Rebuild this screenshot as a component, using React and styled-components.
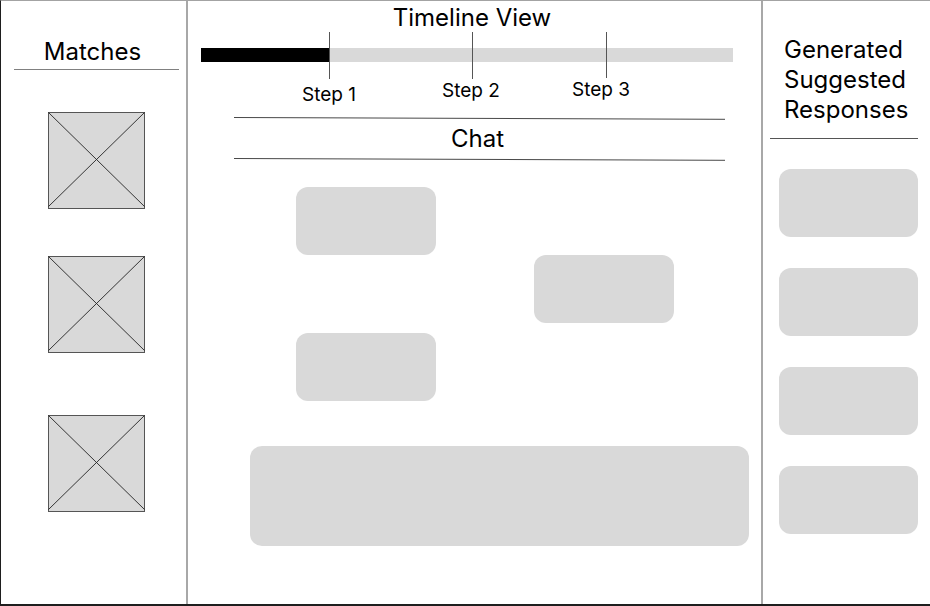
import React from "react";
import styled, { createGlobalStyle } from "styled-components";

const GlobalStyle = createGlobalStyle`
  *, *::before, *::after { box-sizing: border-box; }
  body {
    margin: 0;
    background: #fff;
    color: #000;
    font-family: Inter, "Liberation Sans", sans-serif;
  }
`;

const Page = styled.div`
  display: grid;
  grid-template-columns: 187px minmax(0, 1fr) 169px;
  min-height: 100vh;
  border-top: 1px solid #a3a3a3;
  border-left: 1px solid #1e1e1e;
  border-bottom: 2px solid #1e1e1e;
`;

const MatchesPanel = styled.aside`
  padding: 36px 7px 0 13px;
  border-right: 2px solid #a8a8a8;
`;

const Heading = styled.h2`
  margin: 0;
  font-size: 24px;
  font-weight: 400;
  line-height: ${(p) => p.$line || 30}px;
  text-align: ${(p) => p.$align || "center"};
`;

const MatchesHeader = styled.header`
  padding: 0 8px 2px 0;
  border-bottom: 1px solid #808080;
`;

const MatchList = styled.ul`
  display: flex;
  flex-direction: column;
  align-items: center;
  margin: 42px 0 0;
  padding: 0;
  list-style: none;
`;

const MatchItem = styled.li`
  height: 97px;
  margin-bottom: ${(p) => p.$after}px;
`;

const Thumb = styled.svg`
  display: block;
  width: 97px;
  height: 97px;
`;

const Main = styled.main`
  padding-top: 3px;
`;

const TimelineTitle = styled.div`
  padding-right: 5px;
`;

const Timeline = styled.div`
  display: grid;
  margin: 0 28px 0 13px;
`;

const Track = styled.div`
  grid-area: 1 / 1;
  height: 14px;
  margin-top: 16px;
  background: #d9d9d9;
`;

const Progress = styled.div`
  height: 100%;
  background: #000;
`;

const Steps = styled.ol`
  grid-area: 1 / 1;
  display: grid;
  grid-template-columns: 56fr 144fr 142fr 126fr 64fr;
  margin: 0;
  padding: 0;
  list-style: none;

  & > :first-child { grid-column-start: 2; }
`;

const Step = styled.li`
  display: flex;
  flex-direction: column;
  align-items: center;
  gap: ${(p) => p.$gap}px;
  font-size: 19px;
  line-height: 24px;
`;

const Tick = styled.span`
  width: 1px;
  height: ${(p) => p.$length}px;
  background: #555;
`;

const StepLabel = styled.span`
  padding-right: ${(p) => p.$shift}px;
`;

const ChatHeader = styled.header`
  margin: 10px 36px 0 46px;
`;

const ChatTitle = styled.div`
  padding: 4px 4px 4px 0;
`;

const RuleSvg = styled.svg`
  display: block;
  width: 100%;
  height: 3px;
`;

const Messages = styled.ol`
  display: flex;
  flex-direction: column;
  margin: 26px 87px 0 108px;
  padding: 0;
  list-style: none;
`;

const Bubble = styled.li`
  align-self: ${(p) => (p.$mine ? "flex-end" : "flex-start")};
  width: 140px;
  height: 68px;
  margin-bottom: ${(p) => p.$after}px;
  border-radius: 12px;
  background: #d9d9d9;
`;

const Composer = styled.form`
  display: flex;
  margin: 45px 12px 0 62px;
`;

const MessageBox = styled.textarea`
  flex: 1;
  min-width: 0;
  height: 100px;
  padding: 12px;
  border: 0;
  border-radius: 12px;
  background: #d9d9d9;
  font: inherit;
  resize: none;
`;

const ResponsesPanel = styled.aside`
  padding: 34px 12px 0 7px;
  border-left: 2px solid #a8a8a8;
`;

const ResponsesHeader = styled.header`
  padding: 0 0 13px 14px;
  border-bottom: 1px solid #555;
`;

const ResponseList = styled.div`
  display: flex;
  flex-direction: column;
  gap: 31px;
  margin: 30px 0 0 9px;
`;

const ResponseCard = styled.button`
  height: 68px;
  padding: 0;
  border: 0;
  border-radius: 12px;
  background: #d9d9d9;
  cursor: pointer;
`;

const matches = [
  { id: 1, after: 47 },
  { id: 2, after: 62 },
  { id: 3, after: 0 },
];

const steps = [
  { label: "Step 1", length: 47, gap: 4, shift: 0 },
  { label: "Step 2", length: 47, gap: 0, shift: 2 },
  { label: "Step 3", length: 46, gap: 0, shift: 10 },
];

const messages = [
  { id: 1, mine: false, after: 0 },
  { id: 2, mine: true, after: 10 },
  { id: 3, mine: false, after: 0 },
];

function Placeholder() {
  return (
    <Thumb viewBox="0 0 97 97" aria-hidden="true">
      <rect x="0.5" y="0.5" width="96" height="96" fill="#d9d9d9" stroke="#555" />
      <path d="M0.5 0.5L96.5 94.5M96.5 0.5L0.5 94.5" fill="none" stroke="#222" strokeWidth="0.9" />
    </Thumb>
  );
}

function SlopedRule() {
  return (
    <RuleSvg viewBox="0 0 491 3" preserveAspectRatio="none" aria-hidden="true">
      <path d="M0 0.5L491 2.3" stroke="#333" strokeWidth="0.9" />
    </RuleSvg>
  );
}

export default function App() {
  return (
    <>
      <GlobalStyle />
      <Page>
        <MatchesPanel>
          <MatchesHeader>
            <Heading>Matches</Heading>
          </MatchesHeader>
          <MatchList>
            {matches.map((m) => (
              <MatchItem key={m.id} $after={m.after}>
                <Placeholder />
              </MatchItem>
            ))}
          </MatchList>
        </MatchesPanel>

        <Main>
          <TimelineTitle>
            <Heading $line={28}>Timeline View</Heading>
          </TimelineTitle>
          <Timeline>
            <Track>
              <Progress style={{ width: "24%" }} />
            </Track>
            <Steps>
              {steps.map((s) => (
                <Step key={s.label} $gap={s.gap}>
                  <Tick $length={s.length} />
                  <StepLabel $shift={s.shift}>{s.label}</StepLabel>
                </Step>
              ))}
            </Steps>
          </Timeline>

          <ChatHeader>
            <SlopedRule />
            <ChatTitle>
              <Heading>Chat</Heading>
            </ChatTitle>
            <SlopedRule />
          </ChatHeader>
          <Messages>
            {messages.map((m) => (
              <Bubble key={m.id} $mine={m.mine} $after={m.after} />
            ))}
          </Messages>
          <Composer>
            <MessageBox aria-label="Message" />
          </Composer>
        </Main>

        <ResponsesPanel>
          <ResponsesHeader>
            <Heading $align="left">Generated Suggested Responses</Heading>
          </ResponsesHeader>
          <ResponseList>
            {[1, 2, 3, 4].map((n) => (
              <ResponseCard key={n} type="button" aria-label={`Suggested response ${n}`} />
            ))}
          </ResponseList>
        </ResponsesPanel>
      </Page>
    </>
  );
}
